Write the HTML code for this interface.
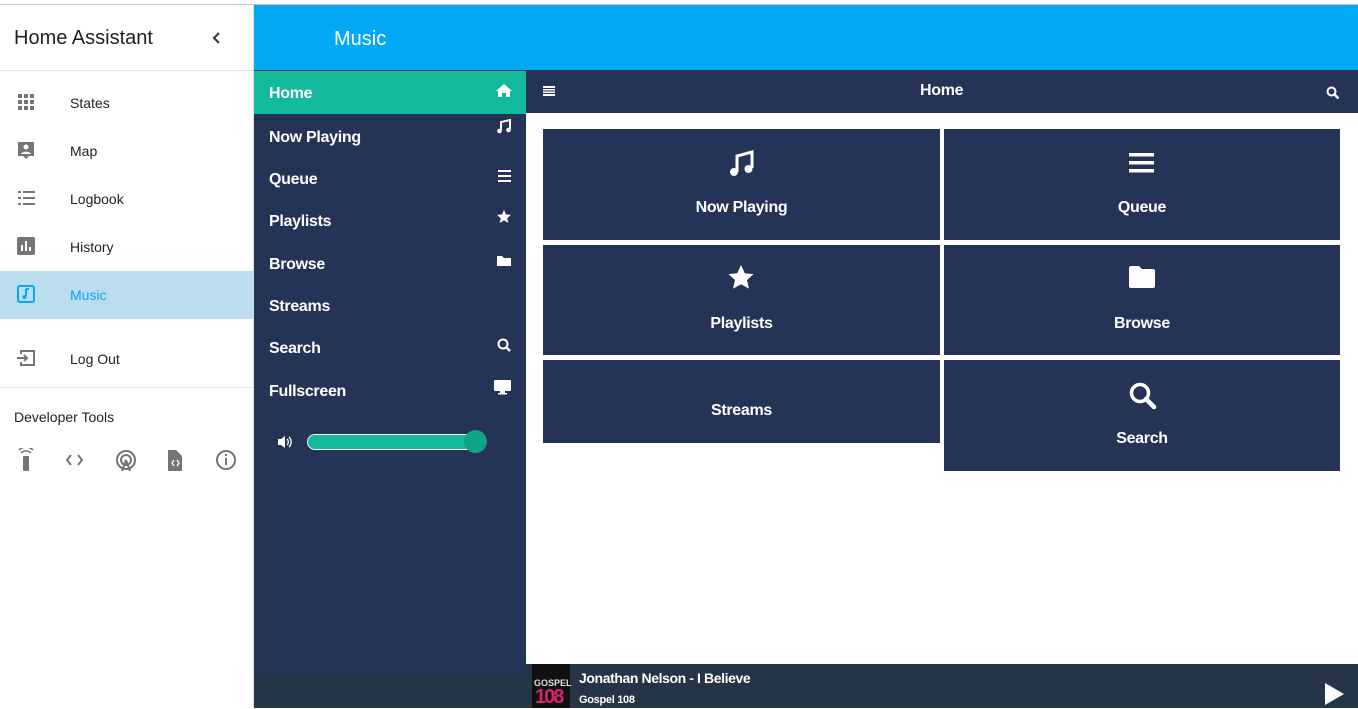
<!DOCTYPE html>
<html><head><style>
*{margin:0;padding:0;box-sizing:border-box}
body{width:1358px;height:708px;overflow:hidden;background:#fff;font-family:"Liberation Sans",sans-serif;position:relative}
.a{position:absolute}
.side{left:0;top:5px;width:254px;height:703px;background:#fff;border-right:1px solid #ddd}
.nav{left:0;width:254px;height:48px;font-size:14px;color:#212121}
.nav span{position:absolute;left:70px;top:16px}
.nav svg{position:absolute;left:17px;top:14px}
.m{color:#fff;font-weight:bold;font-size:16px;letter-spacing:-0.3px}
.tile{background:#243356;color:#fff;font-weight:bold;font-size:16px;text-align:center;letter-spacing:-0.3px}
</style></head><body>
<div class="a" style="left:0;top:4px;width:1358px;height:1px;background:#c8c8c8"></div>
<div class="a side">
 <div class="a" style="left:14px;top:22px;font-size:20px;color:#212121">Home Assistant</div>
 <svg class="a" style="left:212px;top:27px" width="10" height="12"><path d="M7 1L2 6l5 5" fill="none" stroke="#333" stroke-width="2"/></svg>
 <div class="a" style="left:0;top:65px;width:254px;height:1px;background:#e8e8e8"></div>
</div>
<div class="a nav" style="top:79px"><svg width="18" height="18"><g fill="#757575"><rect x="1" y="1" width="4" height="4"/><rect x="7" y="1" width="4" height="4"/><rect x="13" y="1" width="4" height="4"/><rect x="1" y="7" width="4" height="4"/><rect x="7" y="7" width="4" height="4"/><rect x="13" y="7" width="4" height="4"/><rect x="1" y="13" width="4" height="4"/><rect x="7" y="13" width="4" height="4"/><rect x="13" y="13" width="4" height="4"/></g></svg><span>States</span></div>
<div class="a nav" style="top:127px"><svg width="18" height="20"><path d="M1 1h16v14h-5l-3 3-3-3H1z" fill="#757575"/><circle cx="9" cy="6" r="2.5" fill="#fff"/><path d="M4 13c1-3 9-3 10 0z" fill="#fff"/></svg><span>Map</span></div>
<div class="a nav" style="top:175px"><svg width="18" height="18"><g fill="#757575"><rect x="1" y="2" width="3" height="2"/><rect x="6" y="2" width="12" height="2"/><rect x="1" y="8" width="3" height="2"/><rect x="6" y="8" width="12" height="2"/><rect x="1" y="14" width="3" height="2"/><rect x="6" y="14" width="12" height="2"/></g></svg><span>Logbook</span></div>
<div class="a nav" style="top:223px"><svg width="18" height="18"><rect x="0" y="0" width="18" height="18" rx="2" fill="#757575"/><g fill="#fff"><rect x="4" y="8" width="2" height="6"/><rect x="8" y="4" width="2" height="10"/><rect x="12" y="10" width="2" height="4"/></g></svg><span>History</span></div>
<div class="a nav" style="top:271px;background:#bcdcef;color:#03a9f4"><svg width="18" height="18"><rect x="1" y="1" width="16" height="16" rx="2" fill="none" stroke="#03a9f4" stroke-width="2"/><path d="M9 4v7" stroke="#03a9f4" stroke-width="2"/><circle cx="7.5" cy="12" r="2" fill="#03a9f4"/><path d="M9 4h3" stroke="#03a9f4" stroke-width="2"/></svg><span>Music</span></div>
<div class="a nav" style="top:335px"><svg width="18" height="18"><path d="M4 5V2h13v14H4v-3" fill="none" stroke="#757575" stroke-width="2"/><path d="M0 9h10M7 6l3 3-3 3" fill="none" stroke="#757575" stroke-width="2"/></svg><span>Log Out</span></div>
<div class="a" style="left:0;top:387px;width:254px;height:1px;background:#e8e8e8"></div>
<div class="a" style="left:14px;top:409px;font-size:14px;color:#212121">Developer Tools</div>
<svg class="a" style="left:14px;top:448px" width="230" height="24"><g fill="#757575" stroke="#757575">
<rect x="9" y="8" width="6" height="15" rx="1" stroke="none"/><path d="M7 5a7 7 0 0 1 10 0M5 2a10 10 0 0 1 14 0" fill="none" stroke-width="1.5"/>
<path d="M57 7l-4 5 4 5M64 7l4 5-4 5" fill="none" stroke-width="2"/>
<circle cx="112" cy="12" r="9" fill="none" stroke-width="2"/><circle cx="112" cy="12" r="5" fill="none" stroke-width="2"/><path d="M112 12l-4 11M112 12l4 11" fill="none" stroke-width="2"/>
<path d="M154 2h8l6 6v15h-14z" stroke="none"/><path d="M160 12l-2 3 2 3M163 12l2 3-2 3" fill="none" stroke="#fff" stroke-width="1.3"/>
<circle cx="212" cy="12" r="9" fill="none" stroke-width="2"/><rect x="211" y="10" width="2" height="7" stroke="none"/><rect x="211" y="6" width="2" height="2" stroke="none"/>
</g></svg>

<div class="a" style="left:254px;top:5px;width:1104px;height:65px;background:#03a9f4"></div>
<div class="a" style="left:334px;top:28px;font-size:20px;color:#fff">Music</div>

<div class="a" style="left:254px;top:70px;width:272px;height:638px;background:#243356"></div>
<div class="a" style="left:254px;top:71px;width:272px;height:43px;background:#12b99a"></div>
<div class="a m" style="left:269px;top:85px">Home</div>
<div class="a m" style="left:269px;top:129px">Now Playing</div>
<div class="a m" style="left:269px;top:171px">Queue</div>
<div class="a m" style="left:269px;top:213px">Playlists</div>
<div class="a m" style="left:269px;top:256px">Browse</div>
<div class="a m" style="left:269px;top:298px">Streams</div>
<div class="a m" style="left:269px;top:340px">Search</div>
<div class="a m" style="left:269px;top:383px">Fullscreen</div>
<svg class="a" style="left:494px;top:82px" width="20" height="320"><g fill="#fff">
<path d="M2 9l8-7 8 7h-2v6h-4v-4h-4v4H4V9z"/>
<path d="M7 48v-8l9-2v9" fill="none" stroke="#fff" stroke-width="2"/><circle cx="5.5" cy="49" r="2.3"/><circle cx="14.5" cy="48" r="2.3"/>
<rect x="4" y="88" width="13" height="2"/><rect x="4" y="93" width="13" height="2"/><rect x="4" y="98" width="13" height="2"/>
<path d="M10 128l2 4.5 5 .4-3.8 3.3 1.2 4.8-4.4-2.6-4.4 2.6 1.2-4.8L3 132.9l5-.4z"/>
<path d="M3 174h5l2 2h7v8H3z"/>
<circle cx="9" cy="262" r="4.5" fill="none" stroke="#fff" stroke-width="2"/><path d="M12 265l4 4" stroke="#fff" stroke-width="2.5"/>
<rect x="0" y="298" width="17" height="11" rx="1"/><rect x="6" y="309" width="5" height="2"/><rect x="4" y="311" width="9" height="1.5"/>
</g></svg>
<svg class="a" style="left:277px;top:435px" width="16" height="14"><path d="M1 4h3l4-3v12l-4-3H1z" fill="#fff"/><path d="M10 4a4 4 0 0 1 0 6M12 2a7 7 0 0 1 0 10" stroke="#fff" fill="none" stroke-width="1.3"/></svg>
<div class="a" style="left:307px;top:434px;width:175px;height:16px;border-radius:8px;background:#12b99a;border:1px solid #fff"></div>
<div class="a" style="left:464px;top:430px;width:23px;height:23px;border-radius:50%;background:#10a386"></div>

<div class="a" style="left:526px;top:70px;width:832px;height:43px;background:#243356"></div>
<svg class="a" style="left:543px;top:86px" width="13" height="10"><g fill="#fff"><rect y="0" width="12" height="2"/><rect y="3" width="12" height="1.5"/><rect y="5.5" width="12" height="1.5"/><rect y="8" width="12" height="2"/></g></svg>
<div class="a m" style="left:920px;top:82px">Home</div>
<svg class="a" style="left:1326px;top:86px" width="14" height="14"><circle cx="5.5" cy="5.5" r="4" fill="none" stroke="#fff" stroke-width="2"/><path d="M8.5 8.5l4 4" stroke="#fff" stroke-width="2.5"/></svg>

<div class="a tile" style="left:543px;top:129px;width:397px;height:111px"><svg style="position:absolute;left:186px;top:21px" width="26" height="28"><path d="M8 22V6l15-4v16" fill="none" stroke="#fff" stroke-width="3"/><circle cx="5" cy="22" r="4" fill="#fff"/><circle cx="19.5" cy="19" r="4" fill="#fff"/></svg><div style="position:absolute;width:100%;top:70px">Now Playing</div></div>
<div class="a tile" style="left:944px;top:129px;width:396px;height:111px"><svg style="position:absolute;left:185px;top:24px" width="26" height="20"><g fill="#fff"><rect x="0" y="0" width="25" height="3.5"/><rect x="0" y="8" width="25" height="3.5"/><rect x="0" y="16" width="25" height="3.5"/></g></svg><div style="position:absolute;width:100%;top:70px">Queue</div></div>
<div class="a tile" style="left:543px;top:245px;width:397px;height:110px"><svg style="position:absolute;left:184px;top:19px" width="28" height="28"><path d="M14 1l3.8 8.2 8.7.9-6.5 5.9 1.9 8.6L14 20.2l-7.9 4.4 1.9-8.6-6.5-5.9 8.7-.9z" fill="#fff"/></svg><div style="position:absolute;width:100%;top:70px">Playlists</div></div>
<div class="a tile" style="left:944px;top:245px;width:396px;height:110px"><svg style="position:absolute;left:184px;top:20px" width="28" height="24"><path d="M1 3a2 2 0 0 1 2-2h8l3 3h11a2 2 0 0 1 2 2v15a2 2 0 0 1-2 2H3a2 2 0 0 1-2-2z" fill="#fff"/></svg><div style="position:absolute;width:100%;top:70px">Browse</div></div>
<div class="a tile" style="left:543px;top:360px;width:397px;height:83px"><div style="position:absolute;width:100%;top:42px">Streams</div></div>
<div class="a tile" style="left:944px;top:360px;width:396px;height:111px"><svg style="position:absolute;left:185px;top:22px" width="28" height="28"><circle cx="11" cy="11" r="8.5" fill="none" stroke="#fff" stroke-width="3.5"/><path d="M17 17l8 8" stroke="#fff" stroke-width="4.5" stroke-linecap="round"/></svg><div style="position:absolute;width:100%;top:70px">Search</div></div>

<div class="a" style="left:254px;top:675px;width:272px;height:33px;background:#253447"></div>
<div class="a" style="left:526px;top:664px;width:832px;height:44px;background:#253447"></div>
<div class="a" style="left:532px;top:664px;width:38px;height:44px;background:#111"><div style="position:absolute;left:2px;top:14px;font-size:9px;color:#ddd;font-weight:bold">GOSPEL</div><div style="position:absolute;left:3px;top:22px;font-size:20px;color:#d6246e;font-weight:bold;letter-spacing:-2px">108</div></div>
<div class="a" style="left:579px;top:670px;color:#fff;font-weight:bold;font-size:14px;letter-spacing:-0.4px">Jonathan Nelson - I Believe</div>
<div class="a" style="left:579px;top:694px;color:#fff;font-weight:bold;font-size:11px;letter-spacing:-0.3px">Gospel 108</div>
<svg class="a" style="left:1324px;top:682px" width="22" height="24"><path d="M1 1l19 11L1 23z" fill="#fff"/></svg>
</body></html>
